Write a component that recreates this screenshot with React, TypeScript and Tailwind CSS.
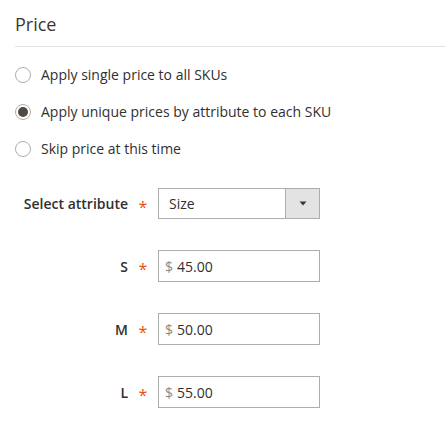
import React from "react";

function Radio({ checked, label }: { checked?: boolean; label: string }) {
  return (
    <div className="flex items-center gap-[10px] h-[20px] leading-[20px] text-[14px]">
      <span className="w-[16px] h-[16px] rounded-full border border-[#adadad] bg-white flex items-center justify-center shrink-0">
        {checked ? <span className="w-[10px] h-[10px] rounded-full bg-[#514943]" /> : null}
      </span>
      <span>{label}</span>
    </div>
  );
}

function Label({ text }: { text: string }) {
  return (
    <div className="w-[143px] flex items-center justify-end shrink-0">
      <span className="font-semibold text-[14px]">{text}</span>
      <span className="w-[30px] text-center text-[#eb5202] text-[16px] leading-none relative top-[3px]">*</span>
    </div>
  );
}

function PriceRow({ label, value }: { label: string; value: string }) {
  return (
    <div className="flex h-[32px] items-stretch">
      <Label text={label} />
      <div className="w-[162px] border border-[#adadad] flex items-center pl-[6px] text-[14px]">
        <span className="text-[#8a8a8a] mr-[4px]">$</span>
        <span>{value}</span>
      </div>
    </div>
  );
}

export default function App() {
  return (
    <div className="w-[446px] h-[429px] bg-white text-[#303030] font-['Open_Sans',sans-serif] pl-[15px] overflow-hidden">
      <div className="pt-[12px] pb-[10px] leading-[24px] text-[18px] text-[#41362f] border-b border-[#e3e3e3]">
        Price
      </div>
      <div className="pt-[18px] flex flex-col gap-[17px]">
        <Radio label="Apply single price to all SKUs" />
        <Radio checked label="Apply unique prices by attribute to each SKU" />
        <Radio label="Skip price at this time" />
      </div>
      <div className="mt-[29px] flex flex-col gap-[31px]">
        <div className="flex h-[31px] items-stretch">
          <Label text="Select attribute" />
          <div className="w-[162px] border border-[#adadad] flex items-stretch text-[14px]">
            <div className="flex-1 flex items-center pl-[10px]">Size</div>
            <div className="w-[34px] bg-[#e3e3e3] border-l border-[#adadad] flex items-center justify-center">
              <svg width="8" height="5" viewBox="0 0 8 5">
                <path d="M0.5 0.5 L7.5 0.5 L4 4.5 Z" fill="#41362f" />
              </svg>
            </div>
          </div>
        </div>
        <PriceRow label="S" value="45.00" />
        <PriceRow label="M" value="50.00" />
        <PriceRow label="L" value="55.00" />
      </div>
    </div>
  );
}
